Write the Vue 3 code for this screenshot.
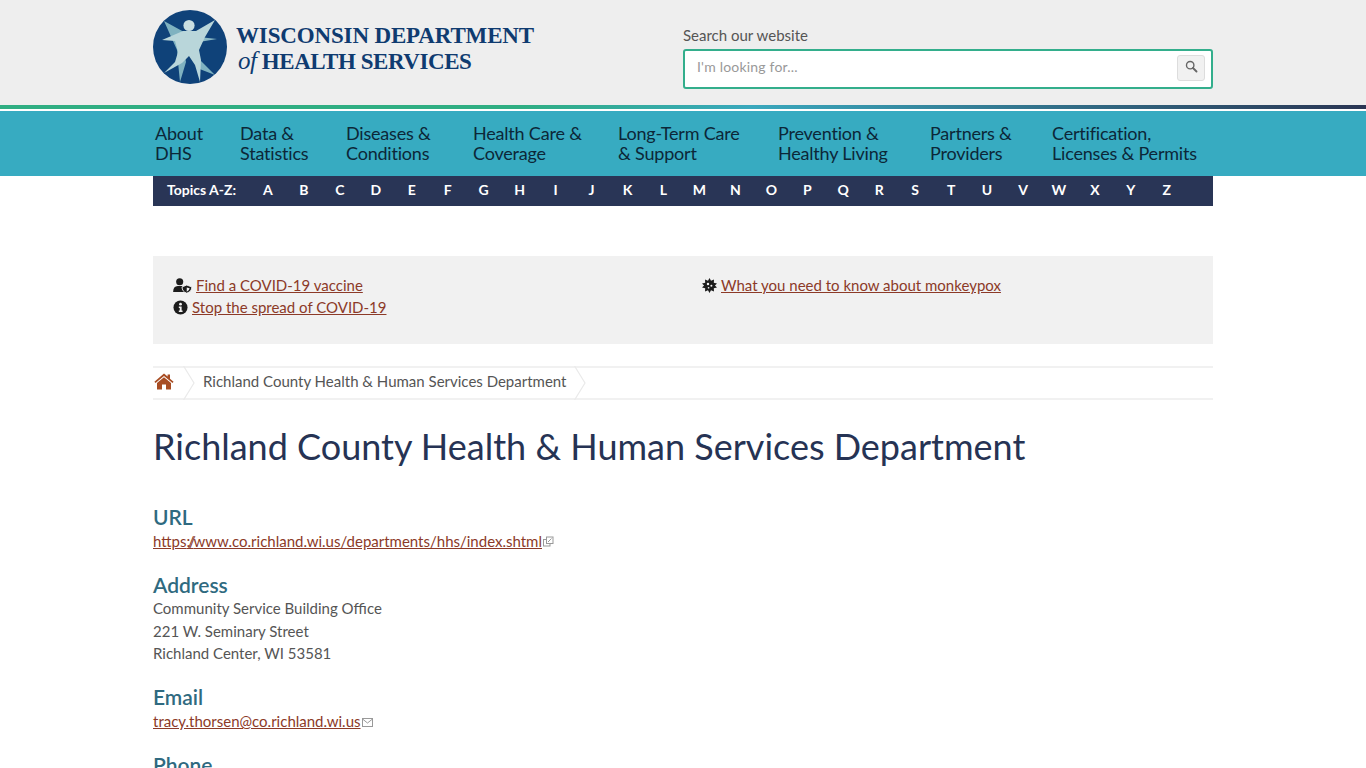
<script setup>
const navItems = [
  ['About', 'DHS'],
  ['Data &', 'Statistics'],
  ['Diseases &', 'Conditions'],
  ['Health Care &', 'Coverage'],
  ['Long-Term Care', '& Support'],
  ['Prevention &', 'Healthy Living'],
  ['Partners &', 'Providers'],
  ['Certification,', 'Licenses & Permits'],
]
const letters = 'ABCDEFGHIJKLMNOPQRSTUVWXYZ'.split('')
</script>

<template>
  <header class="top">
    <div class="wrap top-inner">
      <a class="logo" href="#">
        <svg class="seal" viewBox="0 0 74 74" width="74" height="74">
          <circle cx="37" cy="37" r="37" fill="#0f4279" />
          <path d="M11 11 L31 22 L31 42 L33 52 L27 72 L25 52 L24 40 Z" fill="#7fb2c0" />
          <path d="M46 27 L64 29 L46 32 Z" fill="#8ab9c5" />
          <path d="M43 46 L62 65 L44 58 Z" fill="#7fb2c0" />
          <path d="M62 10 L43 21 L30 21 L9 30 L22 31 L25 42 L22 52 L11 63 L29 53 L36 46 L42 55 L47 72 L48 50 L46 40 L52 27 Z" fill="#b9d6da" />
          <circle cx="36" cy="15.5" r="5.6" fill="#c9dfe2" />
        </svg>
        <span class="logo-text">
          <span class="logo-line">WISCONSIN DEPARTMENT</span>
          <span class="logo-line second"><i class="of">of</i> HEALTH SERVICES</span>
        </span>
      </a>
      <form class="search" @submit.prevent>
        <label class="search-label" for="q">Search our website</label>
        <div class="search-box">
          <input id="q" class="search-input" type="text" placeholder="I'm looking for..." />
          <button class="search-btn" type="submit" aria-label="Search">
            <svg viewBox="0 0 14 14" width="13" height="13">
              <circle cx="5.6" cy="5.6" r="4" fill="none" stroke="#666" stroke-width="1.5" />
              <path d="M8.6 8.6 L12.4 12.4" stroke="#666" stroke-width="2" stroke-linecap="round" />
            </svg>
          </button>
        </div>
      </form>
    </div>
  </header>
  <div class="stripe"></div>

  <nav class="nav">
    <div class="wrap nav-inner">
      <a v-for="item in navItems" :key="item[0]" class="nav-item" href="#">
        {{ item[0] }}<br />{{ item[1] }}
      </a>
    </div>
  </nav>

  <div class="wrap">
    <div class="az">
      <span class="az-title">Topics A-Z:</span>
      <a v-for="l in letters" :key="l" class="az-letter" href="#">{{ l }}</a>
    </div>

    <section class="notice">
      <div class="notice-col">
        <p class="notice-row">
          <svg class="ico-user" viewBox="0 0 20 16" width="19" height="15">
            <circle cx="7" cy="4" r="3.8" fill="#1c1c1c" />
            <path d="M0 15 Q0 8.5 5 8.5 L9 8.5 Q12 8.5 13 10.5 L13 15 Z" fill="#1c1c1c" />
            <path d="M14.5 7.5 L20 9.5 Q20 14.5 14.5 16.2 Q9.5 14.5 9.5 9.5 Z" fill="#1c1c1c" stroke="#f1f1f1" stroke-width="1" />
            <path d="M14.5 10 L17.6 11 Q17.5 13.5 14.5 14.6 Z" fill="#f1f1f1" />
          </svg>
          <a href="#">Find a COVID-19 vaccine</a>
        </p>
        <p class="notice-row">
          <svg class="ico" viewBox="0 0 16 16" width="15" height="15">
            <circle cx="8" cy="8" r="7.5" fill="#1c1c1c" />
            <circle cx="8" cy="4.4" r="1.5" fill="#f1f1f1" />
            <path d="M6.2 7 H9.2 V11.3 H10.2 V12.7 H6.2 V11.3 H7.2 V8.4 H6.2 Z" fill="#f1f1f1" />
          </svg>
          <a href="#">Stop the spread of COVID-19</a>
        </p>
      </div>
      <div class="notice-col">
        <p class="notice-row">
          <svg class="ico" viewBox="0 0 16 16" width="15" height="15">
            <path d="M8 0 L9.6 3 L12.8 1.6 L12.6 5 L16 5.8 L13.8 8 L16 10.2 L12.6 11 L12.8 14.4 L9.6 13 L8 16 L6.4 13 L3.2 14.4 L3.4 11 L0 10.2 L2.2 8 L0 5.8 L3.4 5 L3.2 1.6 L6.4 3 Z" fill="#1c1c1c" />
            <circle cx="6.4" cy="6.4" r="1.3" fill="#f1f1f1" />
            <circle cx="10" cy="8.2" r="1.1" fill="#f1f1f1" />
            <circle cx="7" cy="10.4" r="0.9" fill="#f1f1f1" />
          </svg>
          <a href="#">What you need to know about monkeypox</a>
        </p>
      </div>
    </section>

    <div class="crumbs">
      <a class="crumb-home" href="#" aria-label="Home">
        <svg viewBox="0 0 20 17" width="20" height="17">
          <path d="M10 0.5 L13.6 3.6 V1.6 H16 V5.7 L19.6 8.8 L18.5 10 L10 2.9 L1.5 10 L0.4 8.8 Z" fill="#a84d23" />
          <path d="M10 4.3 L17 10 V16.5 H12 V11.5 H8 V16.5 H3 V10 Z" fill="#a84d23" />
        </svg>
      </a>
      <svg class="chev" viewBox="0 0 12 34" width="12" height="34">
        <path d="M0.5 0 L11 17 L0.5 34" fill="none" stroke="#eaeaea" stroke-width="1.2" />
      </svg>
      <span class="crumb-text">Richland County Health &amp; Human Services Department</span>
      <svg class="chev" viewBox="0 0 12 34" width="12" height="34">
        <path d="M0.5 0 L11 17 L0.5 34" fill="none" stroke="#eaeaea" stroke-width="1.2" />
      </svg>
    </div>

    <h1 class="title">Richland County Health &amp; Human Services Department</h1>

    <h2 class="label first">URL</h2>
    <p class="value">
      <a href="#">https<span class="tight">://</span>www.co.richland.wi.us/departments/hhs/index.shtml</a>
      <svg class="ext" viewBox="0 0 11 11" width="11" height="11">
        <rect x="0.5" y="3.5" width="6.5" height="6.5" fill="#fff" stroke="#999" />
        <rect x="3.5" y="1" width="6.5" height="6.5" fill="#fff" stroke="#999" />
        <path d="M5 6 L8.5 2.5" stroke="#999" />
      </svg>
    </p>

    <h2 class="label">Address</h2>
    <p class="value">
      Community Service Building Office<br />
      221 W. Seminary Street<br />
      Richland Center, WI 53581
    </p>

    <h2 class="label">Email</h2>
    <p class="value">
      <a href="#">tracy.thorsen@co.richland.wi.us</a>
      <svg class="ext" viewBox="0 0 11 9" width="11" height="9">
        <rect x="0.5" y="0.5" width="10" height="8" fill="#fff" stroke="#999" />
        <path d="M0.5 1 L5.5 5 L10.5 1" fill="none" stroke="#999" />
      </svg>
    </p>

    <h2 class="label">Phone</h2>
    <p class="value">608-764-8640</p>
  </div>
</template>

<style>
html, body {
  margin: 0;
  background: #fff;
  overflow-x: hidden;
}
</style>

<style scoped>
.wrap {
  width: 1060px;
  margin: 0 auto;
  font-family: Lato, "Open Sans", sans-serif;
}
.top {
  height: 105px;
  background: #eee;
}
.top-inner {
  display: flex;
  justify-content: space-between;
  box-sizing: border-box;
  padding-top: 10px;
}
.logo {
  display: flex;
  gap: 9px;
  text-decoration: none;
}
.seal {
  display: block;
}
.logo-text {
  display: flex;
  flex-direction: column;
  padding-top: 13px;
  font-family: "Liberation Serif", serif;
  font-weight: 700;
  font-size: 23px;
  line-height: 26px;
  letter-spacing: -0.15px;
  color: #0f3b70;
}
.second {
  height: 26px;
  letter-spacing: -0.45px;
}
.of {
  font-size: 25px;
  line-height: 0;
  font-weight: 400;
  margin-left: 2px;
}
.search {
  width: 530px;
  padding-top: 16px;
}
.search-label {
  display: block;
  font-size: 15px;
  line-height: 19px;
  color: #555;
  margin-bottom: 4px;
}
.search-box {
  display: flex;
  align-items: center;
  justify-content: space-between;
  box-sizing: border-box;
  height: 40px;
  padding: 0 6px 0 12px;
  background: #fff;
  border: 2px solid #33ae8c;
  border-radius: 3px;
}
.search-input {
  flex: 1;
  border: 0;
  outline: 0;
  padding: 0 0 6px;
  font-family: inherit;
  font-size: 14px;
  letter-spacing: 0.2px;
  color: #555;
  background: transparent;
}
.search-input::placeholder {
  color: #999;
  opacity: 1;
}
.search-btn {
  display: flex;
  align-items: center;
  justify-content: center;
  width: 28px;
  height: 26px;
  margin-bottom: 2px;
  padding: 0 0 3px;
  background: #f1f1f1;
  border: 1px solid #ddd;
  border-radius: 3px;
}
.stripe {
  height: 4px;
  background: linear-gradient(90deg, #2fae82 0%, #2fae82 38%, #3aa8bd 55%, #2a3553 100%);
}
.nav {
  margin-top: 2px;
  height: 65px;
  background: #37abc1;
}
.nav-inner {
  display: grid;
  grid-template-columns: 85px 106px 127px 145px 160px 152px 122px auto;
  box-sizing: border-box;
  padding: 12px 0 0 2px;
}
.nav-item {
  font-size: 18px;
  line-height: 20px;
  letter-spacing: -0.2px;
  color: #0c2738;
  text-decoration: none;
}
.az {
  display: flex;
  align-items: center;
  box-sizing: border-box;
  height: 30px;
  padding: 0 0 3px 14px;
  background: #293556;
  color: #fff;
}
.az-title {
  width: 83px;
  font-size: 14px;
  font-weight: 700;
}
.az-letter {
  width: 35.96px;
  text-align: center;
  font-size: 14px;
  font-weight: 700;
  color: #fff;
  text-decoration: none;
}
.notice {
  display: flex;
  box-sizing: border-box;
  height: 88px;
  margin-top: 50px;
  padding: 18px 20px 0;
  background: #f1f1f1;
  font-size: 15px;
  line-height: 22px;
}
.notice-col:first-child {
  width: 529px;
}
.notice-row {
  display: flex;
  align-items: center;
  gap: 4px;
  margin: 0;
  height: 22px;
}
.notice a,
.value a {
  color: #8c3a28;
  text-decoration: underline;
}
.crumbs {
  display: flex;
  align-items: center;
  box-sizing: border-box;
  height: 34px;
  margin-top: 22px;
  border-top: 2px solid #f1f1f1;
  border-bottom: 2px solid #f1f1f1;
  font-size: 15px;
  color: #555;
}
.crumb-home {
  display: flex;
  padding: 0 9px 3px 1px;
}
.chev {
  flex: none;
}
.crumb-text {
  padding: 0 8px 5px;
}
.title {
  margin: 24px 0 0;
  font-size: 36px;
  line-height: 44px;
  font-weight: 400;
  color: #263354;
}
.label {
  margin: 19.5px 0 0;
  font-size: 21px;
  line-height: 25.5px;
  font-weight: 600;
  color: #2f6a80;
}
.label.first {
  margin-top: 36px;
}
.value {
  margin: 0;
  font-size: 15px;
  line-height: 22.6px;
  color: #555;
}
.tight {
  letter-spacing: -2.3px;
}
.ext {
  margin-left: 1px;
}
</style>
